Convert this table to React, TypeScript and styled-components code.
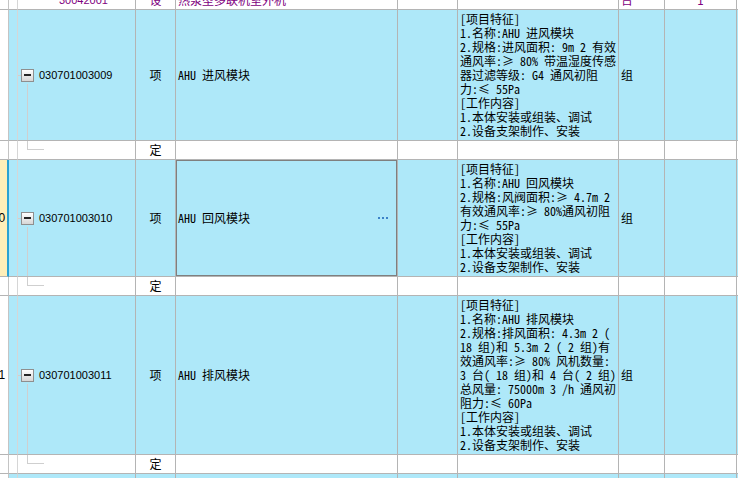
import React from 'react';
import styled, { createGlobalStyle, css } from 'styled-components';

const Global = createGlobalStyle`
  html, body { margin: 0; padding: 0; background: #fff; overflow: hidden; }
`;

const FONT = '"Noto Sans Mono CJK SC", "Noto Sans CJK SC", "Liberation Sans", sans-serif';
const GRID = '23px 9px 118px 40px 222px 60px 161px 46px 72px 40px';
const BLUE = '#aee8f9';
const LINE = '#b4b4b4';
const TREE = '#cfcfcf';

const Viewport = styled.div`
  width: 738px;
  height: 478px;
  overflow: hidden;
  background: #fff;
  font-family: ${FONT};
  font-size: 12px;
  color: #000;
`;

const Sheet = styled.div`
  width: 791px;
  margin-left: -14px;
  margin-top: -9px;
  display: flex;
  flex-direction: column;
`;

const Row = styled.div<{ $h?: number }>`
  display: grid;
  grid-template-columns: ${GRID};
  ${(p) => p.$h && css`height: ${p.$h}px;`}
`;

const Cell = styled.div<{ $fill?: boolean; $faint?: boolean; $center?: boolean; $purple?: boolean }>`
  box-sizing: border-box;
  min-width: 0;
  overflow: hidden;
  white-space: nowrap;
  border-right: 1px solid ${(p) => (p.$faint ? '#d6d6d6' : LINE)};
  border-bottom: 1px solid ${LINE};
  background: ${(p) => (p.$fill ? BLUE : '#fff')};
  color: ${(p) => (p.$purple ? '#800080' : '#000')};
  display: flex;
  align-items: center;
  justify-content: ${(p) => (p.$center ? 'center' : 'flex-start')};
  padding-left: ${(p) => (p.$center ? 0 : 2)}px;
  line-height: 18px;
`;

const NumCell = styled(Cell)<{ $current?: boolean }>`
  justify-content: center;
  padding-left: 4px;
  font-family: "Liberation Sans", sans-serif;
  border-right: ${(p) => (p.$current ? '2px solid #2ba2d3' : '1px solid #c4c4c4')};
  background: ${(p) => (p.$current ? '#ffefb9' : '#fff')};
`;

const TreeCell = styled(Cell)`
  display: grid;
  grid-template-rows: 1fr auto 1fr;
  align-items: stretch;
  justify-items: start;
  padding-left: 0;
`;

const Node = styled.div`
  display: flex;
  align-items: center;
`;

const Stub = styled.span`
  width: 3px;
  height: 1px;
  background: ${TREE};
`;

const Toggle = styled.span`
  box-sizing: border-box;
  width: 13px;
  height: 13px;
  border: 1px solid #8f8f8f;
  background: linear-gradient(#ffffff, #d6d6d6);
  display: flex;
  align-items: center;
  justify-content: center;
`;

const Minus = styled.span`
  width: 7px;
  height: 2px;
  background: #262626;
`;

const Code = styled.span<{ $purple?: boolean }>`
  margin-left: 5px;
  font-family: "Liberation Sans", sans-serif;
  font-size: 11px;
  color: ${(p) => (p.$purple ? '#800080' : '#000')};
`;

const Drop = styled.span`
  margin-left: 9px;
  width: 1px;
  background: ${TREE};
`;

const ElbowCell = styled(Cell)`
  align-items: flex-start;
  padding-left: 0;
`;

const Elbow = styled.span`
  box-sizing: border-box;
  margin-left: 9px;
  width: 17px;
  height: 9px;
  border-left: 1px solid ${TREE};
  border-bottom: 1px solid ${TREE};
`;

const HeadCode = styled(Cell)`
  padding-left: 41px;
  font-family: "Liberation Sans", sans-serif;
  font-size: 11px;
`;

const NameCell = styled(Cell)<{ $selected?: boolean }>`
  position: relative;
  justify-content: space-between;
  padding-right: 9px;
  ${(p) =>
    p.$selected &&
    css`
      &::after {
        content: '';
        position: absolute;
        top: -1px;
        left: -1px;
        right: -1px;
        bottom: -1px;
        border: 2px solid #7f7f7f;
        pointer-events: none;
      }
    `}
`;

const Ellipsis = styled.span`
  display: flex;
  gap: 2px;
  align-items: center;
`;

const Dot = styled.span`
  width: 2px;
  height: 2px;
  background: #3b82c8;
`;

const DescCell = styled(Cell)`
  display: block;
  padding: 2px 0 2px 2px;
`;

const DescLine = styled.div`
  height: 14px;
  line-height: 14px;
`;

type Item = {
  no: string;
  code: string;
  name: string;
  desc: string[];
  current?: boolean;
  selected?: boolean;
};

const work = ['[工作内容]', '1.本体安装或组装、调试', '2.设备支架制作、安装'];

const items: Item[] = [
  {
    no: '',
    code: '030701003009',
    name: 'AHU 进风模块',
    desc: [
      '[项目特征]',
      '1.名称:AHU 进风模块',
      '2.规格:进风面积: 9m 2 有效',
      '通风率:≥ 80% 带温湿度传感',
      '器过滤等级: G4 通风初阻',
      '力:≤ 55Pa',
      ...work,
    ],
  },
  {
    no: '10',
    code: '030701003010',
    name: 'AHU 回风模块',
    current: true,
    selected: true,
    desc: [
      '[项目特征]',
      '1.名称:AHU 回风模块',
      '2.规格:风阀面积:≥ 4.7m 2',
      '有效通风率:≥ 80%通风初阻',
      '力:≤ 55Pa',
      ...work,
    ],
  },
  {
    no: '11',
    code: '030701003011',
    name: 'AHU 排风模块',
    desc: [
      '[项目特征]',
      '1.名称:AHU 排风模块',
      '2.规格:排风面积: 4.3m 2 (',
      '18 组)和 5.3m 2 ( 2 组)有',
      '效通风率:≥ 80% 风机数量:',
      '3 台( 18 组)和 4 台( 2 组)',
      '总风量: 75000m 3 /h 通风初',
      '阻力:≤ 60Pa',
      ...work,
    ],
  },
];

function ItemRow({ item }: { item: Item }) {
  return (
    <Row>
      <NumCell $current={item.current}>{item.no}</NumCell>
      <Cell $fill $faint />
      <TreeCell $fill>
        <span />
        <Node>
          <Stub />
          <Toggle>
            <Minus />
          </Toggle>
          <Code>{item.code}</Code>
        </Node>
        <Drop />
      </TreeCell>
      <Cell $fill $center>项</Cell>
      <NameCell $fill $selected={item.selected}>
        <span>{item.name}</span>
        {item.selected && (
          <Ellipsis>
            <Dot />
            <Dot />
            <Dot />
          </Ellipsis>
        )}
      </NameCell>
      <Cell $fill />
      <DescCell $fill>
        {item.desc.map((l, i) => (
          <DescLine key={i}>{l}</DescLine>
        ))}
      </DescCell>
      <Cell $fill>组</Cell>
      <Cell $fill />
      <Cell $fill />
    </Row>
  );
}

function QuotaRow() {
  return (
    <Row $h={19}>
      <NumCell />
      <Cell $faint />
      <ElbowCell>
        <Elbow />
      </ElbowCell>
      <Cell $center>定</Cell>
      <Cell />
      <Cell />
      <Cell />
      <Cell />
      <Cell />
      <Cell />
    </Row>
  );
}

export default function App() {
  return (
    <>
      <Global />
      <Viewport>
        <Sheet>
          <Row $h={19}>
            <NumCell />
            <Cell $faint />
            <HeadCode $purple>30042001</HeadCode>
            <Cell $center $purple>设</Cell>
            <Cell $purple>热泵型多联机室外机</Cell>
            <Cell />
            <Cell />
            <Cell $purple>台</Cell>
            <Cell $center $purple>1</Cell>
            <Cell />
          </Row>
          {items.map((it) => (
            <React.Fragment key={it.code}>
              <ItemRow item={it} />
              <QuotaRow />
            </React.Fragment>
          ))}
          <Row $h={40}>
            <NumCell />
            <Cell $fill $faint />
            <Cell $fill />
            <Cell $fill />
            <Cell $fill />
            <Cell $fill />
            <Cell $fill />
            <Cell $fill />
            <Cell $fill />
            <Cell $fill />
          </Row>
        </Sheet>
      </Viewport>
    </>
  );
}
